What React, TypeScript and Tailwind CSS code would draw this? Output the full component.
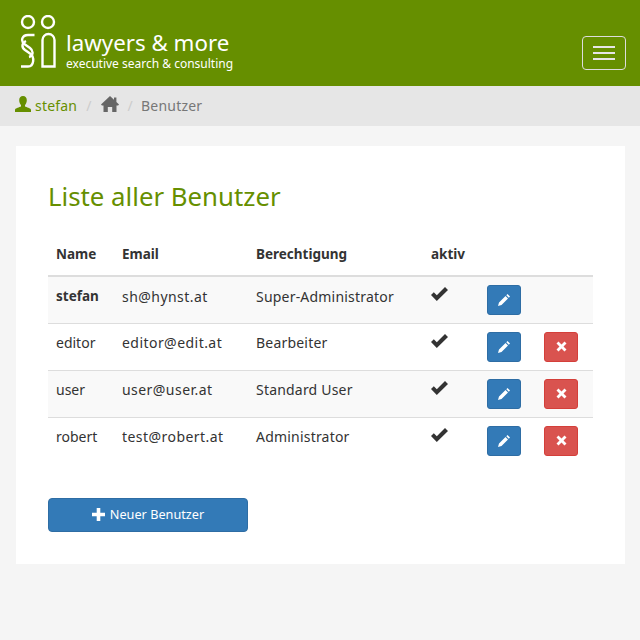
const font = "font-['Noto_Sans','Lato',sans-serif]";

const users = [
  { name: 'stefan', email: 'sh@hynst.at', role: 'Super-Administrator', self: true },
  { name: 'editor', email: 'editor@edit.at', role: 'Bearbeiter', self: false },
  { name: 'user', email: 'user@user.at', role: 'Standard User', self: false },
  { name: 'robert', email: 'test@robert.at', role: 'Administrator', self: false },
];

function Logo() {
  return (
    <svg width="40" height="54" viewBox="0 0 40 54" fill="none" stroke="white" strokeWidth="2.4">
      <circle cx="8" cy="7" r="6" />
      <circle cx="28" cy="7" r="6" />
      <path d="M22.500 51.500V25a6 6 0 0 1 12 0v26.500z" />
      <path d="M14.500 20H8C2 20 0 26 5 29.500l5 3.500c4 3 3 8-1 9" />
      <path d="M6 26c-4 2-5 6-1 9l5 3.500c5 3.500 4 13-2 13H1" />
    </svg>
  );
}

function UserIcon() {
  return (
    <svg width="16" height="16" viewBox="0 0 16 16" fill="#668f00">
      <path d="M8 0c2.500 0 3.800 1.800 3.800 4.200 0 2-.9 3.800-1.800 4.800v1.500c1.500.8 5.500 1.500 6 3.200V16H0v-2.300c.5-1.700 4.500-2.400 6-3.200V9C5.100 8 4.200 6.200 4.200 4.200 4.200 1.800 5.500 0 8 0z" />
    </svg>
  );
}

function HomeIcon() {
  return (
    <svg width="18" height="16" viewBox="0 0 18 16" fill="#666666">
      <path d="M9 0l4 3.800V1.500h2.400v4.600L18 8.600l-.9.9H15.500V16h-4.300v-5H6.800v5H2.500V9.500H.9L0 8.600z" />
    </svg>
  );
}

function CheckIcon() {
  return (
    <svg width="17" height="14" viewBox="0 0 17 14" fill="#333333">
      <path d="M0 8l2.800-2.800 3 3L14 0l3 3L5.800 14z" />
    </svg>
  );
}

function PencilIcon() {
  return (
    <svg width="14" height="14" viewBox="0 0 14 14" fill="white">
      <path d="M10.500 1l2.500 2.500-1.200 1.200-2.500-2.500zM8.500 3l2.500 2.500-6.500 6.500L1 13l1-3.500z" />
    </svg>
  );
}

function CrossIcon() {
  return (
    <svg width="11" height="11" viewBox="0 0 11 11" fill="white">
      <path d="M2.500 0.500L5.500 3.500l3-3 2 2-3 3 3 3-2 2-3-3-3 3-2-2 3-3-3-3z" />
    </svg>
  );
}

function PlusIcon() {
  return (
    <svg width="13" height="13" viewBox="0 0 13 13" fill="white">
      <path d="M4.700 0h3.600v4.700H13v3.600H8.300V13H4.700V8.300H0V4.700h4.700z" />
    </svg>
  );
}

export default function App() {
  return (
    <div className={`${font} min-h-[640px] bg-[#f5f5f5] text-sm text-[#333333]`}>
      <header className="flex h-[86px] items-start justify-between bg-[#668f00] pl-5 pr-[14px]">
        <div className="flex items-start pt-[15px]">
          <Logo />
          <div className="ml-[6px] flex flex-col pt-[14px] text-white">
            <span className="text-[22.300px] leading-[28px]">lawyers &amp; more</span>
            <span className="text-[12px] leading-[14px]">executive search &amp; consulting</span>
          </div>
        </div>
        <button className="mt-9 flex h-[34px] w-11 flex-col items-center justify-center gap-1 rounded border border-[#dddddd]">
          <span className="h-0.5 w-[22px] bg-[#e6e6e6]" />
          <span className="h-0.5 w-[22px] bg-[#e6e6e6]" />
          <span className="h-0.5 w-[22px] bg-[#e6e6e6]" />
        </button>
      </header>

      <nav className="flex h-10 items-center bg-[#e6e6e6] pl-[15px] tracking-[0.2px]">
        <span className="mb-1"><UserIcon /></span>
        <span className="ml-1 text-[#668f00]">stefan</span>
        <span className="mx-[9px] text-[#cccccc]">/</span>
        <span className="mb-1"><HomeIcon /></span>
        <span className="ml-[9px] mr-2 text-[#cccccc]">/</span>
        <span className="text-[#777777]">Benutzer</span>
      </nav>

      <main className="mx-4 mt-5 h-[418px] w-[609px] bg-white px-8 pt-[32px]">
        <h1 className="text-[25.800px] leading-[36px] text-[#668f00]">Liste aller Benutzer</h1>

        <table className="mt-[26px] w-[545px] table-fixed border-collapse">
          <thead>
            <tr className="h-[36px] border-b-2 border-[#dddddd] text-left text-[13.500px] font-bold">
              <th className="w-[66px] pl-2 pt-[5px] align-top">Name</th>
              <th className="w-[134px] pl-2 pt-[5px] align-top">Email</th>
              <th className="w-[175px] pl-2 pt-[5px] align-top">Berechtigung</th>
              <th className="w-[56px] pl-2 pt-[5px] align-top">aktiv</th>
              <th className="w-[57px]" />
              <th />
            </tr>
          </thead>
          <tbody>
            {users.map((u, i) => (
              <tr key={u.name} className={`h-[47px] border-b border-[#dddddd] last:border-b-0 ${i % 2 === 0 ? 'bg-[#f9f9f9]' : ''}`}>
                <td className={`pl-2 align-top ${u.self ? 'pt-[10px] text-[13.500px] font-bold' : 'pt-[9px]'}`}>{u.name}</td>
                <td className={`pl-2 align-top tracking-[0.45px] ${u.self ? 'pt-[10px]' : 'pt-[9px]'}`}>{u.email}</td>
                <td className={`pl-2 align-top tracking-[0.2px] ${u.self ? 'pt-[10px]' : 'pt-[9px]'}`}>{u.role}</td>
                <td className="pl-2 pt-[10px] align-top"><CheckIcon /></td>
                <td className="pl-2 align-top pt-2">
                  <button className="flex h-[30px] w-[34px] items-center justify-center rounded-[3px] border border-[#2e6da4] bg-[#337ab7]">
                    <PencilIcon />
                  </button>
                </td>
                <td className="pl-2 align-top pt-2">
                  {!u.self && (
                    <button className="flex h-[30px] w-[34px] items-center justify-center rounded-[3px] border border-[#d43f3a] bg-[#d9534f]">
                      <CrossIcon />
                    </button>
                  )}
                </td>
              </tr>
            ))}
          </tbody>
        </table>

        <button className="mt-[34px] flex h-[34px] w-[200px] items-center justify-center gap-[5px] rounded border border-[#2e6da4] bg-[#337ab7] pb-0.5 text-[12.700px] text-white">
          <PlusIcon />
          Neuer Benutzer
        </button>
      </main>
    </div>
  );
}
